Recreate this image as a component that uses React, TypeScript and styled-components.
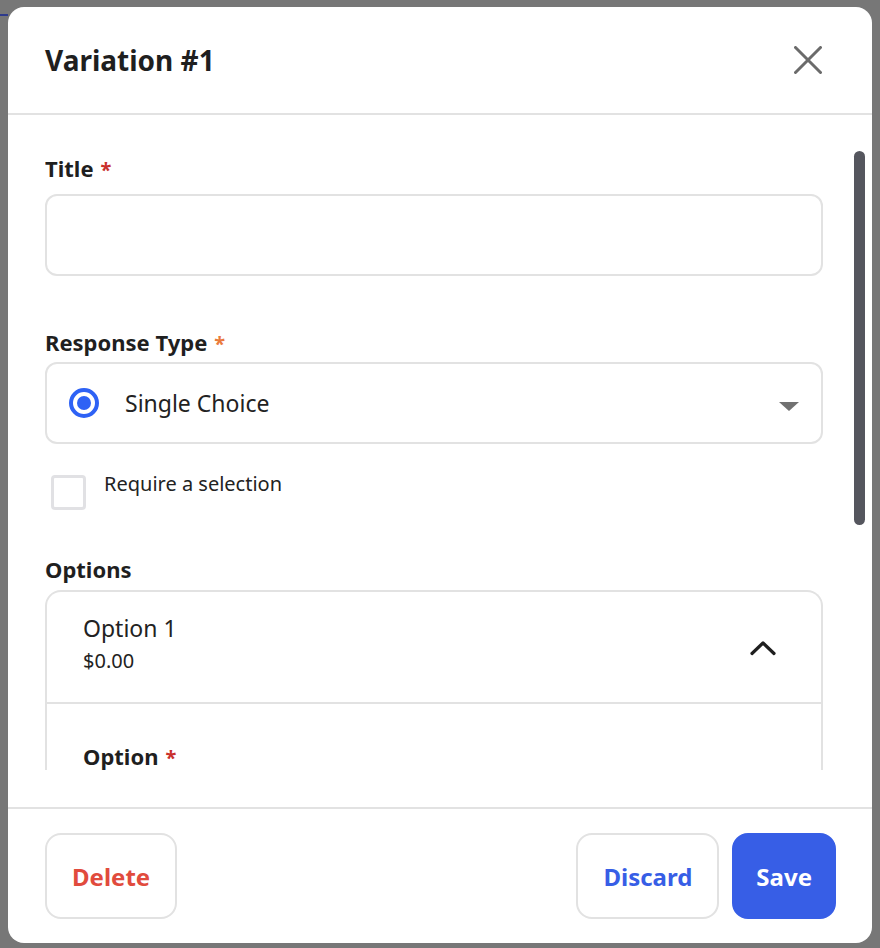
import React from 'react';
import styled, { createGlobalStyle } from 'styled-components';

const GlobalStyle = createGlobalStyle`
  html, body {
    margin: 0;
    padding: 0;
    background: #777777;
  }
  body {
    font-family: "Noto Sans", "Open Sans", "Liberation Sans", sans-serif;
    color: #1f1f1f;
  }
`;

const Backdrop = styled.div`
  position: relative;
  width: 880px;
  height: 948px;
  padding: 7px 8px 5px;
  box-sizing: border-box;
  background: #777777;

  &::before {
    content: '';
    position: absolute;
    left: 0;
    top: 14px;
    width: 8px;
    height: 2px;
    background: #2e3a8c;
  }
`;

const Modal = styled.div`
  width: 864px;
  height: 936px;
  background: #ffffff;
  border-radius: 16px;
  display: flex;
  flex-direction: column;
  overflow: hidden;
`;

const Header = styled.div`
  height: 106px;
  flex: none;
  display: flex;
  align-items: center;
  justify-content: space-between;
  padding: 0 50px 0 37px;
  border-bottom: 2px solid #e2e2e2;
`;

const Heading = styled.h2`
  margin: 0;
  font-size: 28px;
  line-height: 38px;
  font-weight: 700;
  color: #1f1f1f;
  padding-bottom: 1px;
`;

const CloseButton = styled.button`
  border: none;
  background: none;
  padding: 0;
  width: 28px;
  height: 28px;
  display: flex;
  align-items: center;
  justify-content: center;
  cursor: pointer;
`;

const Body = styled.div`
  position: relative;
  flex: 1;
  padding: 38px 49px 37px 37px;
  display: flex;
  flex-direction: column;
  min-height: 0;
`;

const Scroller = styled.div`
  flex: 1;
  overflow: hidden;
  min-height: 0;
`;

const ScrollThumb = styled.div`
  position: absolute;
  right: 7px;
  top: 36px;
  width: 11px;
  height: 374px;
  border-radius: 6px;
  background: #55565e;
`;

const Field = styled.div<{ gap?: number; after?: number }>`
  display: flex;
  flex-direction: column;
  gap: ${p => p.gap ?? 11}px;
  margin-bottom: ${p => p.after ?? 0}px;
`;

const Label = styled.label`
  font-size: 22px;
  line-height: 30px;
  height: 30px;
  font-weight: 700;
  color: #1f1f1f;
  display: block;
`;

const Star = styled.span<{ tone?: 'red' | 'orange' }>`
  color: ${p => (p.tone === 'orange' ? '#ea7a3c' : '#c9302c')};
  font-size: 20px;
  line-height: 1;
  margin-left: 7px;
`;

const TextInput = styled.input`
  height: 82px;
  box-sizing: border-box;
  border: 2px solid #e2e2e2;
  border-radius: 12px;
  padding: 0 20px;
  font-family: inherit;
  font-size: 22px;
  outline: none;
`;

const SelectBox = styled.div`
  height: 82px;
  box-sizing: border-box;
  border: 2px solid #e2e2e2;
  border-radius: 12px;
  display: flex;
  align-items: center;
  padding: 0 22px 0 22px;
  gap: 26px;
`;

const Radio = styled.span`
  width: 30px;
  height: 30px;
  box-sizing: border-box;
  border-radius: 50%;
  border: 4px solid #2e62f5;
  display: flex;
  align-items: center;
  justify-content: center;

  &::after {
    content: '';
    width: 14px;
    height: 14px;
    border-radius: 50%;
    background: #2e62f5;
  }
`;

const SelectText = styled.span`
  flex: 1;
  font-size: 23px;
  line-height: 32px;
  color: #222222;
`;

const Caret = styled.span`
  width: 0;
  height: 0;
  border-left: 10px solid transparent;
  border-right: 10px solid transparent;
  border-top: 9px solid #717171;
  margin-top: 6px;
`;

const CheckRow = styled.label`
  display: flex;
  align-items: flex-start;
  gap: 18px;
  padding-left: 6px;
  margin: 31px 0 44px;
`;

const CheckBox = styled.span`
  width: 35px;
  height: 35px;
  box-sizing: border-box;
  border: 3px solid #e1e1e4;
  border-radius: 4px;
  flex: none;
`;

const CheckText = styled.span`
  font-size: 20px;
  color: #222222;
  line-height: 28px;
  margin-top: -5px;
`;

const OptionsCard = styled.div`
  border: 2px solid #e2e2e2;
  border-bottom: none;
  border-radius: 16px 16px 0 0;
`;

const OptionHead = styled.div`
  height: 112px;
  box-sizing: border-box;
  display: flex;
  align-items: center;
  justify-content: space-between;
  padding: 0 45px 0 36px;
  border-bottom: 2px solid #e2e2e2;
`;

const OptionTitles = styled.div`
  display: flex;
  flex-direction: column;
  gap: 3px;
  margin-top: -6px;
`;

const OptionName = styled.span`
  font-size: 23px;
  line-height: 31px;
  color: #222222;
`;

const OptionPrice = styled.span`
  font-size: 20px;
  line-height: 28px;
  color: #222222;
`;

const Chevron = styled.svg`
  margin-top: 2px;
`;

const OptionBody = styled.div`
  padding: 37px 36px 40px;
`;

const Footer = styled.div`
  flex: none;
  height: 136px;
  box-sizing: border-box;
  border-top: 2px solid #e2e2e2;
  display: flex;
  align-items: center;
  padding: 0 36px 0 37px;
  gap: 13px;
`;

const Spacer = styled.div`
  flex: 1;
`;

const Button = styled.button<{ variant: 'danger' | 'outline' | 'primary' }>`
  height: 86px;
  box-sizing: border-box;
  border-radius: 16px;
  font-family: inherit;
  font-size: 24px;
  font-weight: 700;
  padding: 0 ${p => (p.variant === 'primary' ? 22 : 25)}px;
  cursor: pointer;
  border: 2px solid
    ${p => (p.variant === 'primary' ? '#375ee6' : '#e2e2e2')};
  background: ${p => (p.variant === 'primary' ? '#375ee6' : '#ffffff')};
  color: ${p =>
    p.variant === 'danger'
      ? '#e14b3d'
      : p.variant === 'outline'
      ? '#375ee6'
      : '#ffffff'};
`;

export default function App() {
  return (
    <>
      <GlobalStyle />
      <Backdrop>
        <Modal>
          <Header>
            <Heading>Variation #1</Heading>
            <CloseButton aria-label="Close">
              <svg width="28" height="28" viewBox="0 0 28 28">
                <path
                  d="M1.5 1.5 L26.5 26.5 M26.5 1.5 L1.5 26.5"
                  stroke="#6b6b6b"
                  strokeWidth="3"
                  strokeLinecap="round"
                />
              </svg>
            </CloseButton>
          </Header>

          <Body>
            <Scroller>
              <Field after={51}>
                <Label>
                  Title<Star>*</Star>
                </Label>
                <TextInput />
              </Field>

              <Field gap={5}>
                <Label>
                  Response Type<Star tone="orange">*</Star>
                </Label>
                <SelectBox>
                  <Radio />
                  <SelectText>Single Choice</SelectText>
                  <Caret />
                </SelectBox>
              </Field>

              <CheckRow>
                <CheckBox />
                <CheckText>Require a selection</CheckText>
              </CheckRow>

              <Field gap={6}>
                <Label>Options</Label>
                <OptionsCard>
                  <OptionHead>
                    <OptionTitles>
                      <OptionName>Option 1</OptionName>
                      <OptionPrice>$0.00</OptionPrice>
                    </OptionTitles>
                    <Chevron width="26" height="16" viewBox="0 0 26 16">
                      <path
                        d="M2 13.5 L13 3 L24 13.5"
                        fill="none"
                        stroke="#1f1f1f"
                        strokeWidth="3.2"
                        strokeLinecap="round"
                        strokeLinejoin="round"
                      />
                    </Chevron>
                  </OptionHead>
                  <OptionBody>
                    <Label>
                      Option<Star>*</Star>
                    </Label>
                  </OptionBody>
                </OptionsCard>
              </Field>
            </Scroller>
            <ScrollThumb />
          </Body>

          <Footer>
            <Button variant="danger">Delete</Button>
            <Spacer />
            <Button variant="outline">Discard</Button>
            <Button variant="primary">Save</Button>
          </Footer>
        </Modal>
      </Backdrop>
    </>
  );
}
